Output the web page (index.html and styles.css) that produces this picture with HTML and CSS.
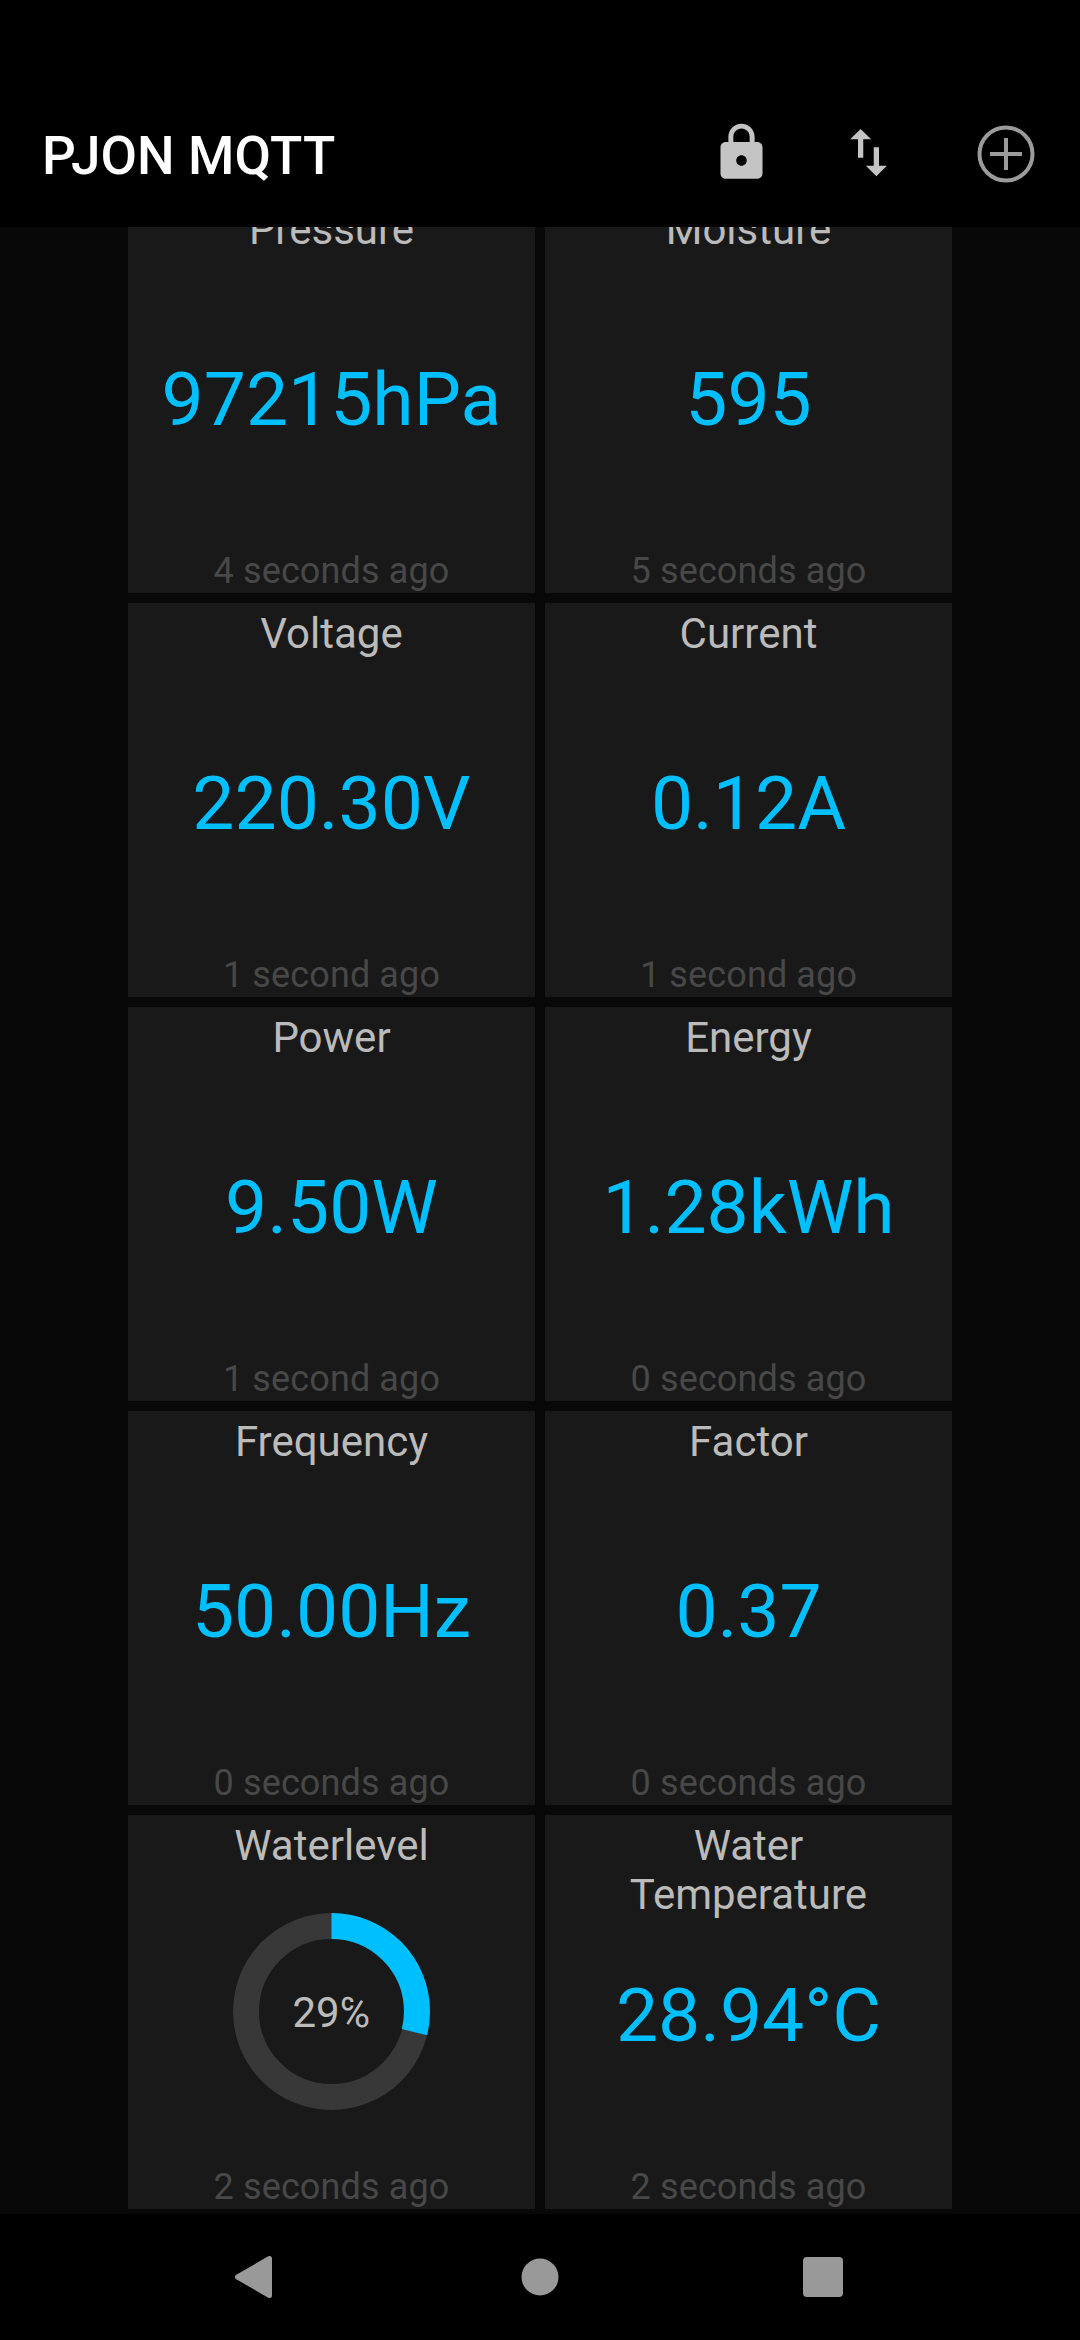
FILE: index.html
```html
<!DOCTYPE html>
<html lang="en">
<head>
<meta charset="utf-8">
<title>PJON MQTT</title>
<link rel="stylesheet" href="styles.css">
</head>
<body>
<div class="screen">
  <header class="appbar">
    <h1 class="title">PJON MQTT</h1>
    <div class="actions">
      <svg class="action" viewBox="0 0 24 24"><path d="M18 8h-1V6c0-2.76-2.24-5-5-5S7 3.24 7 6v2H6c-1.1 0-2 .9-2 2v10c0 1.1.9 2 2 2h12c1.1 0 2-.9 2-2V10c0-1.1-.9-2-2-2zm-6 9c-1.1 0-2-.9-2-2s.9-2 2-2 2 .9 2 2-.9 2-2 2zm3.1-9H8.9V6c0-1.71 1.39-3.1 3.1-3.1 1.71 0 3.1 1.39 3.1 3.1v2z"/></svg>
      <svg class="action" viewBox="0 0 24 24"><path d="M16 17.01V10h-2v7.01h-3L15 21l4-3.99h-3zM9 3L5 6.99h3V14h2V6.99h3L9 3z"/></svg>
      <svg class="action-add" viewBox="0 0 58 58"><circle cx="29" cy="29" r="26.5"/><path d="M29 13v32M13 29h32"/></svg>
    </div>
  </header>

  <main class="dashboard">
    <div class="tiles">
      <section class="tile"><h2 class="name">Pressure</h2><p class="value">97215hPa</p><p class="time">4 seconds ago</p></section>
      <section class="tile"><h2 class="name">Moisture</h2><p class="value">595</p><p class="time">5 seconds ago</p></section>
      <section class="tile"><h2 class="name">Voltage</h2><p class="value">220.30V</p><p class="time">1 second ago</p></section>
      <section class="tile"><h2 class="name">Current</h2><p class="value">0.12A</p><p class="time">1 second ago</p></section>
      <section class="tile"><h2 class="name">Power</h2><p class="value">9.50W</p><p class="time">1 second ago</p></section>
      <section class="tile"><h2 class="name">Energy</h2><p class="value">1.28kWh</p><p class="time">0 seconds ago</p></section>
      <section class="tile"><h2 class="name">Frequency</h2><p class="value">50.00Hz</p><p class="time">0 seconds ago</p></section>
      <section class="tile"><h2 class="name">Factor</h2><p class="value">0.37</p><p class="time">0 seconds ago</p></section>
      <section class="tile">
        <h2 class="name">Waterlevel</h2>
        <div class="gauge">
          <svg class="ring" viewBox="0 0 197 197">
            <circle class="track" cx="98.5" cy="98.5" r="85.5"/>
            <circle class="fill" cx="98.5" cy="98.5" r="85.5" pathLength="100" stroke-dasharray="28.9 100" transform="rotate(-90 98.5 98.5)"/>
          </svg>
          <span class="percent">29℅</span>
        </div>
        <p class="time">2 seconds ago</p>
      </section>
      <section class="tile"><h2 class="name">Water<br>Temperature</h2><p class="value">28.94°C</p><p class="time">2 seconds ago</p></section>
    </div>
  </main>

  <nav class="navbar">
    <svg class="nav-icon" viewBox="0 0 44 44"><path class="back" d="M5.500 22 37.500 3.500V40.500Z"/></svg>
    <svg class="nav-icon" viewBox="0 0 44 44"><circle cx="23" cy="22" r="18.500"/></svg>
    <svg class="nav-icon" viewBox="0 0 44 44"><rect x="2" y="2" width="40" height="40" rx="4"/></svg>
  </nav>
</div>
</body>
</html>
```

FILE: styles.css
```css
* {
  box-sizing: border-box;
  margin: 0;
}

body {
  background: #000;
  font-family: Roboto, sans-serif;
}

.screen {
  display: flex;
  flex-direction: column;
  width: 1080px;
  height: 2340px;
  overflow: hidden;
}

.appbar {
  display: flex;
  align-items: center;
  justify-content: space-between;
  flex: none;
  height: 227px;
  padding: 80px 45px 0 42px;
}

.title {
  color: #fff;
  font-size: 53px;
  font-weight: 500;
  line-height: 62px;
  letter-spacing: 0.1px;
  padding-top: 4px;
}

.actions {
  display: flex;
  align-items: center;
}

.action {
  width: 63px;
  height: 63px;
  margin-right: 64px;
  margin-top: -3px;
  fill: #c4c4c4;
}

.action-add {
  width: 58px;
  height: 58px;
  margin-left: 13px;
  fill: none;
  stroke: #9b9b9b;
  stroke-width: 4;
}

/* The list is scrolled to its end, so the first row runs under the app bar. */
.dashboard {
  display: flex;
  flex: 1;
  flex-direction: column;
  align-items: center;
  justify-content: flex-end;
  min-height: 0;
  padding-bottom: 5px;
  overflow: hidden;
  background: #080808;
}

.tiles {
  display: grid;
  flex: none;
  grid-template-columns: 407px 407px;
  grid-auto-rows: 394px;
  gap: 10px;
}

/* Name, reading and time share one cell and are aligned within it. */
.tile {
  display: grid;
  grid-template: 100% / 100%;
  justify-items: center;
  background: #191919;
  text-align: center;
}

.tile > * {
  grid-area: 1 / 1;
}

.name {
  align-self: start;
  padding-top: 6px;
  color: #bbb;
  font-size: 42px;
  font-weight: 400;
  line-height: 49px;
}

.value {
  align-self: center;
  padding-top: 6px;
  color: #00bfff;
  font-size: 75px;
  line-height: 88px;
}

.time {
  align-self: end;
  color: #484848;
  font-size: 36px;
  line-height: 43px;
  letter-spacing: 0.12px;
}

.gauge {
  display: grid;
  align-self: center;
  place-items: center;
  margin-bottom: 1px;
}

.ring,
.percent {
  grid-area: 1 / 1;
}

.ring {
  width: 197px;
  height: 197px;
  fill: none;
  stroke-width: 26;
}

.track {
  stroke: #383838;
}

.fill {
  stroke: #00bfff;
}

.percent {
  padding-top: 2px;
  color: #bbb;
  font-size: 42px;
  line-height: 49px;
}

.navbar {
  display: flex;
  align-items: center;
  justify-content: space-between;
  flex: none;
  height: 126px;
  padding: 0 235px 0 232px;
}

.nav-icon {
  width: 44px;
  height: 44px;
  fill: #999;
}

.back {
  stroke: #999;
  stroke-width: 5;
  stroke-linejoin: round;
}
```
